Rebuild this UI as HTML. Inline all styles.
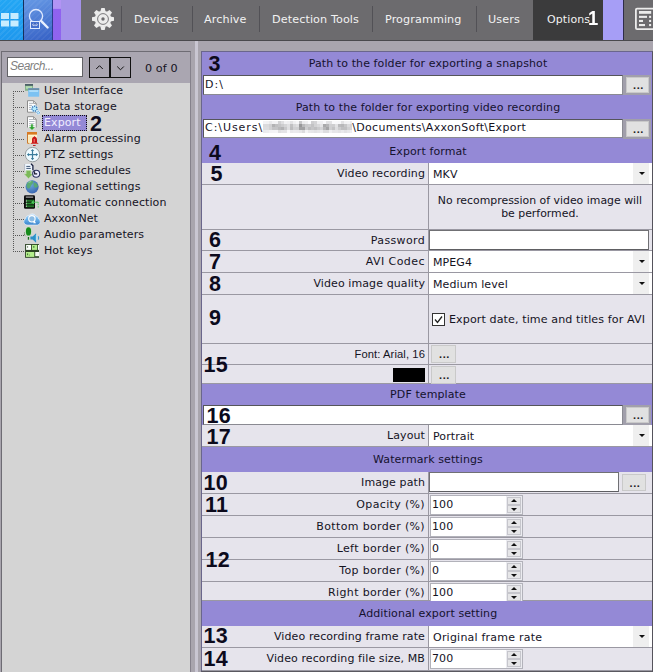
<!DOCTYPE html>
<html><head><meta charset="utf-8"><title>Options - Export</title>
<style>
html,body{margin:0;padding:0}
body{width:653px;height:672px;overflow:hidden;position:relative;background:#a9a5ae;font-family:"DejaVu Sans","Liberation Sans",sans-serif;font-size:11px;letter-spacing:0.1px;color:#15131f}
div,span{box-sizing:border-box}
#top{position:absolute;left:0;top:0;width:653px;height:41px;background:#6c6b6e;border-bottom:1px solid #4a494d}
#top .t{position:absolute;top:0;height:40px;line-height:40px;color:#f2f2f2;font-size:11.200px;white-space:nowrap}
#top .sep{position:absolute;top:6px;height:26px;width:1px;background:#525156}
#left{position:absolute;left:1px;top:51px;width:190px;height:625px;background:#d4d4d4;border:1px solid #6e6c74;border-right-color:#85818c}
#li{position:absolute;left:1px;top:0;width:186px;height:100%}
#srch{position:absolute;left:-1px;top:0;width:188px;height:31px;background:#aaa6b1}
#sbox{position:absolute;left:5px;top:5px;width:76px;height:20px;background:#fff;border:1px solid #626266;font-style:italic;color:#808080;line-height:17px;padding-left:2px;font-family:"Liberation Sans",sans-serif;font-size:12px;letter-spacing:-0.500px}
.nb{position:absolute;margin-left:1px;top:5px;width:21px;height:21px;border:1px solid #111;background:#aaa6b1}
.ti{position:absolute;left:39px;height:16px;line-height:15px;white-space:nowrap;padding:0 2px 0 2px;font-size:11px;color:#15131f}
.ti.sel{background:#9489d6;color:#f0ecff;outline:1px dotted #111;outline-offset:-1px;padding-right:6px}
.ic{position:absolute;left:20px;width:18px;height:16px}
.tl{position:absolute;left:10px;width:11px;height:0;border-top:1px dotted #555}
#tv{position:absolute;left:10px;top:39px;width:0;height:161px;border-left:1px dotted #555}
#right{position:absolute;left:201px;top:51px;width:452px;height:621px;background:#e6e4ec;border:1px solid #6a668c;border-right:1px solid #55535c;border-bottom:2px solid #5a5860}
#right .in{position:absolute;left:-1px;top:-51px}
#rp{position:absolute;left:201px;top:0;width:450px}
.hdr{position:absolute;left:1px;width:450px;padding-left:2px;background:#9489d6;text-align:center;font-size:11px;color:#15122e;white-space:nowrap}
.row{position:absolute;left:1px;width:450px;border-bottom:1px solid #9a98a2;background:#e6e4ec}
.lab{position:absolute;left:0;top:0;width:227px;height:100%;text-align:right;padding-right:3px;border-right:1px solid #9a98a2;white-space:nowrap;font-size:11px}
.val{position:absolute;left:227px;top:0;width:223px}
.combo{position:absolute;left:0;top:0;width:223px;background:#fff;padding-left:4px;white-space:nowrap}
.cbtn{position:absolute;right:3px;top:0;width:16px;background:#efefef}
.cbtn i{position:absolute;left:6px;top:9px;width:0;height:0;border-left:3px solid transparent;border-right:3px solid transparent;border-top:3px solid #111}
.note{position:absolute;left:0;top:9px;width:222px;text-align:center;line-height:13px;font-size:10.900px;letter-spacing:0;padding-left:0}
.pw{position:absolute;left:0;top:0;right:3px;height:20px;background:#fff;border:1px solid #707074;border-bottom-color:#5e5e62}
.chk{position:absolute;left:3px;top:18px;white-space:nowrap;line-height:14px;font-size:11.100px}
.chk .box{display:inline-block;vertical-align:top;width:13px;height:13px;border:1px solid #333;background:#fff;margin-right:4px;position:relative;top:0}
.chk .box svg{position:absolute;left:0;top:0}
.arial{font-family:"Liberation Sans",sans-serif;font-size:11.200px}
.swatch{position:absolute;right:3px;top:3px;width:32px;height:14px;background:#000}
.dots{position:absolute;width:24px;height:17px;background:#e1e1e1;border:1px solid #c9c9c9;text-align:center;line-height:16px;font-family:"Liberation Sans",sans-serif;font-size:11px;font-weight:bold;color:#222;letter-spacing:0.6px;padding-left:2px}
.tbrow{position:absolute;left:1px;width:450px;background:#9489d6}
.gcell{position:absolute;left:421px;top:0;width:28px;height:100%;background:#a19fab}
.tb{position:absolute;top:0;background:#fff;border:1px solid #8a8a92;border-top-color:#55555a;border-left-color:#55555a;padding-left:1px;white-space:nowrap;font-size:11px}
.blur{display:inline-block;vertical-align:-2px}
.spinbox{position:absolute;left:1px;top:1px;width:93px;height:20px;border:1px solid #b2b2ba;background:#ebebf0}
.spin{position:absolute;left:0;top:0;width:75px;height:18px;line-height:18px;background:#fff;padding-left:1px}
.sp{position:absolute;left:76px;width:14px;height:8px;background:#e6e6e8;border:1px solid #c6c6cc}
.sp.up{top:1px} .sp.dn{top:9px}
.sp i{position:absolute;left:3px;top:1px;width:0;height:0;border-left:3px solid transparent;border-right:3px solid transparent}
.sp.up i{border-bottom:3px solid #111}
.sp.dn i{border-top:3px solid #111;top:2px}
.num{position:absolute;font-family:"Liberation Sans",sans-serif;font-weight:bold;font-size:21.500px;line-height:24px;color:#0c0a1c;letter-spacing:0.300px;white-space:nowrap}
</style></head><body>
<div id="top">
 <div style="position:absolute;left:0;top:0;width:23px;height:40px;background:repeating-linear-gradient(135deg,rgba(255,255,255,.07) 0 1.500px,rgba(255,255,255,0) 1.500px 4px),linear-gradient(180deg,#22a6f4,#1e98ee)"></div>
 <div style="position:absolute;left:24px;top:0;width:28px;height:40px;background:repeating-linear-gradient(135deg,rgba(255,255,255,.05) 0 1.500px,rgba(255,255,255,0) 1.500px 4px),linear-gradient(160deg,#6294e2 10%,#3a66c8 90%)"></div>
 <div style="position:absolute;left:23px;top:0;width:1px;height:40px;background:#15305c"></div>
 <div style="position:absolute;left:52px;top:0;width:1px;height:40px;background:#2c3c8c"></div>
 <div style="position:absolute;left:53px;top:0;width:8px;height:40px;background:linear-gradient(180deg,#b294f4 0,#b294f4 21%,#9062f0 23%,#8e64ee 100%)"></div>
 <div style="position:absolute;left:61px;top:0;width:20px;height:40px;background:#a492ea"></div>
 <svg style="position:absolute;left:0.500px;top:13px" width="18" height="14" viewBox="0 0 18 14"><rect x="0" y="0" width="8" height="6" fill="#c8ecff"/><rect x="9.500" y="0" width="8" height="6" fill="#c8ecff"/><rect x="0" y="7.500" width="8" height="6" fill="#c8ecff"/><rect x="9.500" y="7.500" width="8" height="6" fill="#c8ecff"/></svg>
 <svg style="position:absolute;left:27px;top:8px" width="24" height="24" viewBox="0 0 24 24"><circle cx="9" cy="8.100" r="6.600" fill="none" stroke="#e0eaff" stroke-width="1.300"/><path d="M14.300 13.200l6.300 6.300" stroke="#e8f0ff" stroke-width="2.400" stroke-linecap="round"/><rect x="3.500" y="13.500" width="9" height="7" fill="#4672d0" stroke="#e0eaff" stroke-width="1"/><rect x="4.500" y="15.300" width="7" height="2.900" fill="#3c62bc"/><circle cx="6.300" cy="16.700" r="0.850" fill="none" stroke="#eef4ff" stroke-width="0.600"/><circle cx="9.700" cy="16.700" r="0.850" fill="none" stroke="#eef4ff" stroke-width="0.600"/><path d="M6.300 17.600h3.400" stroke="#eef4ff" stroke-width="0.600"/></svg>
 <svg style="position:absolute;left:91px;top:7px" width="24" height="24" viewBox="-12 -12 24 24"><g fill="#ececec"><circle r="8.300"/><path d="M-2.600 -7.400 L-1.700 -11 L1.700 -11 L2.600 -7.400z" transform="rotate(0)"/><path d="M-2.600 -7.400 L-1.700 -11 L1.700 -11 L2.600 -7.400z" transform="rotate(45)"/><path d="M-2.600 -7.400 L-1.700 -11 L1.700 -11 L2.600 -7.400z" transform="rotate(90)"/><path d="M-2.600 -7.400 L-1.700 -11 L1.700 -11 L2.600 -7.400z" transform="rotate(135)"/><path d="M-2.600 -7.400 L-1.700 -11 L1.700 -11 L2.600 -7.400z" transform="rotate(180)"/><path d="M-2.600 -7.400 L-1.700 -11 L1.700 -11 L2.600 -7.400z" transform="rotate(225)"/><path d="M-2.600 -7.400 L-1.700 -11 L1.700 -11 L2.600 -7.400z" transform="rotate(270)"/><path d="M-2.600 -7.400 L-1.700 -11 L1.700 -11 L2.600 -7.400z" transform="rotate(315)"/></g><circle r="5.400" fill="none" stroke="#6c6b6e" stroke-width="0.900"/><circle r="1.700" fill="#6c6b6e"/></svg>
 <div class="sep" style="left:121px"></div>
 <div class="t" style="left:134px">Devices</div>
 <div class="sep" style="left:192px"></div>
 <div class="t" style="left:204px">Archive</div>
 <div class="sep" style="left:259px"></div>
 <div class="t" style="left:272px">Detection Tools</div>
 <div class="sep" style="left:372px"></div>
 <div class="t" style="left:385px">Programming</div>
 <div class="sep" style="left:476px"></div>
 <div class="t" style="left:488px">Users</div>
 <div style="position:absolute;left:533px;top:0;width:70px;height:40px;background:#3b3b3c"></div>
 <div class="t" style="left:547px;font-size:11px">Options</div>
 <div style="position:absolute;left:588px;top:6px;color:#fff;font:bold 20px/24px 'Liberation Sans',sans-serif;transform:scaleX(.92);transform-origin:0 0">1</div>
 <div style="position:absolute;left:603px;top:0;width:20px;height:40px;background:#a69ef6"></div>
 <div style="position:absolute;left:623px;top:0;width:1px;height:40px;background:#2e2c4a"></div>
 <svg style="position:absolute;left:634px;top:7px" width="19" height="24" viewBox="0 0 19 24"><rect x="1.900" y="1.600" width="22" height="20.600" rx="1.200" fill="none" stroke="#ececec" stroke-width="1.800"/><rect x="5" y="4" width="12.200" height="2.800" fill="#ececec"/><rect x="5" y="8.800" width="8" height="2.100" fill="#ececec"/><rect x="5" y="12.900" width="4" height="2.100" fill="#ececec"/><rect x="5" y="17" width="6" height="2.100" fill="#ececec"/><rect x="15.100" y="8.800" width="2" height="2.100" fill="#ececec"/><rect x="15.100" y="12.900" width="2" height="2.100" fill="#ececec"/><rect x="15.100" y="17" width="2" height="2.100" fill="#ececec"/></svg>
</div>
<div style="position:absolute;left:195px;top:41px;width:3px;height:631px;background:#c9c6d2"></div>
<div id="left"><div id="li">
 <div id="srch">
  <div id="sbox">Search...</div>
  <div class="nb" style="left:86px"><svg width="19" height="19" viewBox="0 0 19 19"><path d="M6.200 11l3.300-3.300 3.300 3.300" fill="none" stroke="#111" stroke-width="1"/></svg></div>
  <div class="nb" style="left:107px"><svg width="19" height="19" viewBox="0 0 19 19"><path d="M6.200 8.500l3.300 3.300 3.300-3.300" fill="none" stroke="#111" stroke-width="1"/></svg></div>
  <div style="position:absolute;left:143px;top:7px;line-height:20px;font-size:11.200px;white-space:nowrap">0 of 0</div>
 </div>
 <div id="tv"></div>
 <div style="position:absolute;left:0;top:-52px;"><div class="tl" style="top:91px"></div><div class="ic" style="top:83px"><svg width="18" height="16" viewBox="0 0 18 16"><rect x="2" y="1" width="8" height="6.800" fill="#86b48c"/><rect x="3" y="3.200" width="6" height="2.500" fill="#b4dcb4"/><rect x="2" y="1" width="8" height="1.800" fill="#4c6068"/><rect x="5.200" y="5.200" width="11" height="8.500" fill="#7cc2f2"/><rect x="5.200" y="5.200" width="11" height="1.800" fill="#6c8ca4"/><rect x="6.200" y="7.400" width="9" height="1.300" fill="#c4e8fc"/></svg></div><div class="ti" style="top:83px"><span>User Interface</span></div><div class="tl" style="top:107px"></div><div class="ic" style="top:99px"><svg width="18" height="16" viewBox="0 0 18 16"><path d="M4.500 1.700h6l2.700 2.700v8.800h-8.700z" fill="#fff" stroke="#8c8c8c"/><path d="M10.500 1.700v2.700h2.700" fill="none" stroke="#8c8c8c" stroke-width="0.800"/><path d="M6 4.300h4M6 6.400h3M6 8.400h2M6 10.400h2" stroke="#a4acb4" stroke-width="0.900"/><circle cx="11.500" cy="9.700" r="3.800" fill="#d8f4ff" opacity="0.700"/><circle cx="11.500" cy="9.700" r="2.500" fill="#b4ecff" stroke="#3a78b8" stroke-width="1.500" stroke-dasharray="1.300 0.900"/><circle cx="15.200" cy="13.600" r="2.300" fill="#e4f6ff" opacity="0.800"/><circle cx="15.200" cy="13.600" r="1.300" fill="#c8f0ff" stroke="#4a8cd0" stroke-width="1" stroke-dasharray="1 0.700"/></svg></div><div class="ti" style="top:99px"><span>Data storage</span></div><div class="tl" style="top:123px"></div><div class="ic" style="top:115px"><svg width="18" height="16" viewBox="0 0 18 16"><path d="M4.500 12.600v-10.900h6l2.700 2.700v8.200" fill="#fff" stroke="#8c8c8c"/><path d="M10.500 1.700v2.700h2.700" fill="none" stroke="#8c8c8c" stroke-width="0.800"/><path d="M6 4.500h5M6 6.500h5.500M6 8.600h5.500M6 10.600h5.500" stroke="#b0b8c0" stroke-width="0.900"/><path d="M8 9.300h1.900v2.800h2.100l-3 2.800l-3-2.800h2z" fill="#2fa030" stroke="#8fd890" stroke-width="0.400"/></svg></div><div class="ti sel" style="top:115px"><span>Export</span></div><div class="tl" style="top:139px"></div><div class="ic" style="top:131px"><svg width="18" height="16" viewBox="0 0 18 16"><rect x="4" y="1" width="10" height="11.800" fill="#fff4cc"/><path d="M4.500 1v11.300h2" fill="none" stroke="#c87830"/><rect x="4" y="1" width="10" height="2.600" fill="#d87a22"/><path d="M5.500 6h4M5.500 8h3M5.500 10h2" stroke="#f4dca0" stroke-width="0.900"/><path d="M11.500 5c0.600 1 2.500 1.200 2.500 3.500v3l1.800 1.300h-8.600l1.800-1.300v-3c0-2.300 1.900-2.500 2.500-3.500z" fill="#c81818"/><rect x="10.600" y="8" width="1.300" height="3.400" fill="#f06868"/><rect x="10" y="14" width="2.600" height="0.900" fill="#b01818"/></svg></div><div class="ti" style="top:131px"><span>Alarm processing</span></div><div class="tl" style="top:155px"></div><div class="ic" style="top:147px"><svg width="18" height="16" viewBox="0 0 18 16"><circle cx="9.500" cy="7.600" r="7.200" fill="#eefaff" stroke="#8c9496" stroke-width="0.900"/><path d="M9.500 3v9.200M4.900 7.600h9.200" stroke="#3a7c9c" stroke-width="1.200"/><path d="M9.500 2l1.700 2.100h-3.400zM9.500 13.200l1.700-2.100h-3.400zM3.900 7.600l2.100-1.700v3.400zM15.100 7.600l-2.100-1.700v3.400z" fill="#3a7c9c"/></svg></div><div class="ti" style="top:147px"><span>PTZ settings</span></div><div class="tl" style="top:171px"></div><div class="ic" style="top:163px"><svg width="18" height="16" viewBox="0 0 18 16"><path d="M2 1h6l1.700 1.700v5h-7.700z" fill="#f0f8ff"/><path d="M8 0.800l1.900 1.900v4.500" fill="none" stroke="#182040" stroke-width="1.300"/><path d="M1.700 1v6.500" stroke="#a0a8b8" stroke-width="0.600"/><path d="M3.300 3.400h4M3.300 5.400h4.500" stroke="#405878" stroke-width="1"/><path d="M3.200 7.500h4.600v3.500h2l-4.300 4.500l-4.300-4.500h2z" fill="#7cb85a" stroke="#b8e0a0" stroke-width="0.500"/><circle cx="13.200" cy="10.800" r="3.500" fill="#ececff" stroke="#2a3060" stroke-width="1.100"/><path d="M11.600 8.200v2.700h2.600" stroke="#181830" fill="none" stroke-width="1.100"/></svg></div><div class="ti" style="top:163px"><span>Time schedules</span></div><div class="tl" style="top:187px"></div><div class="ic" style="top:179px"><svg width="18" height="16" viewBox="0 0 18 16"><defs><radialGradient id="gl" cx="40%" cy="35%" r="70%"><stop offset="0" stop-color="#6aa8d8"/><stop offset="1" stop-color="#3a64b0"/></radialGradient></defs><circle cx="9.100" cy="7.800" r="6.600" fill="url(#gl)"/><path d="M4 4.500c1.500-2.500 4-3 6-2.800c1 1.500-0.500 2.800-1.500 4.300s-1.500 3.500-3 3.500s-2.500-2.500-1.500-5zM11 3.500c1.500 0 3.500 1.500 4 3.500c-0.500 1.500-2 2-3 1.500s-2-3.500-1-5z" fill="#5cac6c" opacity="0.900"/><path d="M5 3.500c1-1 2.500-1.500 3.500-1.300c-0.500 1-2 1.800-3.500 1.300z" fill="#a4e0a8" opacity="0.800"/></svg></div><div class="ti" style="top:179px"><span>Regional settings</span></div><div class="tl" style="top:203px"></div><div class="ic" style="top:195px"><svg width="18" height="16" viewBox="0 0 18 16"><rect x="1" y="0.300" width="11" height="13.400" rx="1.300" fill="#0a0a0a"/><rect x="2.800" y="1.300" width="7.400" height="1.700" fill="#7c7c7c"/><path d="M3 5.300h8M3 6.900h8M3 8.500h8M3 10.100h8M3 11.700h8" stroke="#2a9c34" stroke-width="0.900"/><path d="M3.300 4.800v7.400" stroke="#e8ffe8" stroke-width="0.900" stroke-dasharray="0.800 0.800"/><path d="M8 7.200l3.500-2.300l-1.200 2.300l1.200 2.300z" fill="#44d854"/><path d="M9 7.200h6.200v1" fill="none" stroke="#58c868" stroke-width="1"/><path d="M15.200 8.500v5" stroke="#6cd078" stroke-width="1" stroke-dasharray="1.700 0.800"/></svg></div><div class="ti" style="top:195px"><span>Automatic connection</span></div><div class="tl" style="top:219px"></div><div class="ic" style="top:211px"><svg width="18" height="16" viewBox="0 0 18 16"><defs><linearGradient id="cl" x1="0" y1="0" x2="0" y2="1"><stop offset="0" stop-color="#d4e8fa"/><stop offset="0.450" stop-color="#6cb4ec"/><stop offset="1" stop-color="#3c84cc"/></linearGradient></defs><path d="M4 14a3.300 3.300 0 0 1-1.300-6.300a3 3 0 0 1 3.300-3.200a4 4 0 0 1 6.800 0.500a3 3 0 0 1 2.800 3a3.200 3.200 0 0 1-1.200 6z" fill="url(#cl)" stroke="#e8f4ff" stroke-width="0.600"/><circle cx="8.900" cy="7.800" r="3.200" fill="#8cbce4" stroke="#fff" stroke-width="1.100"/><path d="M11.300 9.300l1.700 3h-2.800z" fill="#fff"/></svg></div><div class="ti" style="top:211px"><span>AxxonNet</span></div><div class="tl" style="top:235px"></div><div class="ic" style="top:227px"><svg width="18" height="16" viewBox="0 0 18 16"><ellipse cx="5.500" cy="4.400" rx="3.200" ry="4.800" fill="#b8f0b0" opacity="0.600"/><ellipse cx="5.500" cy="4.400" rx="2.600" ry="4.200" fill="#178a1c"/><path d="M1.500 5.500v2.500l1.300 1.300" fill="none" stroke="#386038" stroke-width="0.700" stroke-dasharray="1 0.600"/><rect x="4.800" y="10" width="1.300" height="2.700" fill="#1a701c"/><path d="M7.400 9.600h2.200l3.500-3.400v9.500l-3.500-3.300h-2.200z" fill="#2a90c8"/><path d="M13.300 8v5.500" stroke="#a8e8ff" stroke-width="1"/><path d="M15.200 9.200q1 1.700 0 3.400" fill="none" stroke="#3a98d0" stroke-width="1.100"/></svg></div><div class="ti" style="top:227px"><span>Audio parameters</span></div><div class="tl" style="top:251px"></div><div class="ic" style="top:243px"><svg width="18" height="16" viewBox="0 0 18 16"><rect x="2.100" y="1" width="13.900" height="13.800" fill="#2c4424"/><rect x="3.100" y="1.900" width="5" height="5" fill="#fcfffc"/><rect x="9" y="1.900" width="5.200" height="5" fill="#b4ee8c"/><rect x="15" y="1.900" width="1" height="5" fill="#fcfffc"/><rect x="3" y="9" width="8.300" height="4.900" fill="#b4ee8c"/><rect x="12.200" y="9" width="3.800" height="4.200" fill="#f4f8f0"/><rect x="4.200" y="3.200" width="0.900" height="1.500" fill="#506848"/><rect x="10.400" y="3" width="0.900" height="1.800" fill="#2c5c24"/><rect x="4.200" y="10.400" width="0.900" height="1.800" fill="#2c5c24"/><rect x="6" y="11.700" width="0.700" height="0.700" fill="#2c5c24"/></svg></div><div class="ti" style="top:243px"><span>Hot keys</span></div></div>
 <div class="num" style="left:87px;top:60px">2</div>
</div></div>
<div id="right"></div>
<div id="rp"><div class="hdr" style="top:52px;height:23px;line-height:24px">Path to the folder for exporting a snapshot</div><div class="tbrow" style="top:75px;height:20px"><div class="tb" style="left:1px;width:420px;height:20px;line-height:17px"><span style="letter-spacing:1px">D:\</span></div><div class="gcell"></div><div class="dots" style="left:424px;top:2px;width:23px;height:16px;line-height:14px">...</div></div><div class="hdr" style="top:95px;height:24px;line-height:25px">Path to the folder for exporting video recording</div><div class="tbrow" style="top:119px;height:20px"><div class="tb" style="left:1px;width:420px;height:19px;line-height:16px"><span style="letter-spacing:0.95px">C:\Users\</span><svg class="blur" width="89" height="12" viewBox="0 0 89 12"><defs><filter id="bf" x="0" y="0" width="1" height="1"><feGaussianBlur stdDeviation="0.7"/></filter></defs><g filter="url(#bf)"><rect x="0" y="0" width="3" height="3" fill="#f3f3f5"/><rect x="3" y="0" width="3" height="3" fill="#f1f1f3"/><rect x="6" y="0" width="3" height="3" fill="#e9e9eb"/><rect x="9" y="0" width="3" height="3" fill="#f2f2f4"/><rect x="12" y="0" width="3" height="3" fill="#f2f2f4"/><rect x="15" y="0" width="3" height="3" fill="#d1d1d3"/><rect x="18" y="0" width="3" height="3" fill="#dfdfe1"/><rect x="21" y="0" width="3" height="3" fill="#f2f2f4"/><rect x="24" y="0" width="3" height="3" fill="#efeff1"/><rect x="27" y="0" width="3" height="3" fill="#e2e2e4"/><rect x="30" y="0" width="3" height="3" fill="#f0f0f2"/><rect x="33" y="0" width="3" height="3" fill="#f6f6f8"/><rect x="36" y="0" width="3" height="3" fill="#c7c7c9"/><rect x="39" y="0" width="3" height="3" fill="#ebebed"/><rect x="42" y="0" width="3" height="3" fill="#eeeef0"/><rect x="45" y="0" width="3" height="3" fill="#f9f9fb"/><rect x="48" y="0" width="3" height="3" fill="#ceced0"/><rect x="51" y="0" width="3" height="3" fill="#d4d4d6"/><rect x="54" y="0" width="3" height="3" fill="#efeff1"/><rect x="57" y="0" width="3" height="3" fill="#efeff1"/><rect x="60" y="0" width="3" height="3" fill="#f9f9fb"/><rect x="63" y="0" width="3" height="3" fill="#e2e2e4"/><rect x="66" y="0" width="3" height="3" fill="#e2e2e4"/><rect x="69" y="0" width="3" height="3" fill="#f9f9fb"/><rect x="72" y="0" width="3" height="3" fill="#f8f8fa"/><rect x="75" y="0" width="3" height="3" fill="#f7f7f9"/><rect x="78" y="0" width="3" height="3" fill="#e2e2e4"/><rect x="81" y="0" width="3" height="3" fill="#f2f2f4"/><rect x="84" y="0" width="3" height="3" fill="#f3f3f5"/><rect x="87" y="0" width="3" height="3" fill="#ebebed"/><rect x="0" y="3" width="3" height="3" fill="#dadadc"/><rect x="3" y="3" width="3" height="3" fill="#dadadc"/><rect x="6" y="3" width="3" height="3" fill="#d1d1d3"/><rect x="9" y="3" width="3" height="3" fill="#b2b2b4"/><rect x="12" y="3" width="3" height="3" fill="#bfbfc1"/><rect x="15" y="3" width="3" height="3" fill="#c4c4c6"/><rect x="18" y="3" width="3" height="3" fill="#ccccce"/><rect x="21" y="3" width="3" height="3" fill="#d5d5d7"/><rect x="24" y="3" width="3" height="3" fill="#e0e0e2"/><rect x="27" y="3" width="3" height="3" fill="#c0c0c2"/><rect x="30" y="3" width="3" height="3" fill="#d7d7d9"/><rect x="33" y="3" width="3" height="3" fill="#dedee0"/><rect x="36" y="3" width="3" height="3" fill="#979799"/><rect x="39" y="3" width="3" height="3" fill="#bababc"/><rect x="42" y="3" width="3" height="3" fill="#c9c9cb"/><rect x="45" y="3" width="3" height="3" fill="#cdcdcf"/><rect x="48" y="3" width="3" height="3" fill="#c2c2c4"/><rect x="51" y="3" width="3" height="3" fill="#d2d2d4"/><rect x="54" y="3" width="3" height="3" fill="#d9d9db"/><rect x="57" y="3" width="3" height="3" fill="#e4e4e6"/><rect x="60" y="3" width="3" height="3" fill="#a9a9ab"/><rect x="63" y="3" width="3" height="3" fill="#b5b5b7"/><rect x="66" y="3" width="3" height="3" fill="#d0d0d2"/><rect x="69" y="3" width="3" height="3" fill="#ceced0"/><rect x="72" y="3" width="3" height="3" fill="#e2e2e4"/><rect x="75" y="3" width="3" height="3" fill="#bbbbbd"/><rect x="78" y="3" width="3" height="3" fill="#b7b7b9"/><rect x="81" y="3" width="3" height="3" fill="#c6c6c8"/><rect x="84" y="3" width="3" height="3" fill="#dadadc"/><rect x="87" y="3" width="3" height="3" fill="#d3d3d5"/><rect x="0" y="6" width="3" height="3" fill="#dddddf"/><rect x="3" y="6" width="3" height="3" fill="#dcdcde"/><rect x="6" y="6" width="3" height="3" fill="#d2d2d4"/><rect x="9" y="6" width="3" height="3" fill="#c3c3c5"/><rect x="12" y="6" width="3" height="3" fill="#c4c4c6"/><rect x="15" y="6" width="3" height="3" fill="#b9b9bb"/><rect x="18" y="6" width="3" height="3" fill="#b2b2b4"/><rect x="21" y="6" width="3" height="3" fill="#c8c8ca"/><rect x="24" y="6" width="3" height="3" fill="#dfdfe1"/><rect x="27" y="6" width="3" height="3" fill="#bcbcbe"/><rect x="30" y="6" width="3" height="3" fill="#d0d0d2"/><rect x="33" y="6" width="3" height="3" fill="#cfcfd1"/><rect x="36" y="6" width="3" height="3" fill="#a1a1a3"/><rect x="39" y="6" width="3" height="3" fill="#a1a1a3"/><rect x="42" y="6" width="3" height="3" fill="#ccccce"/><rect x="45" y="6" width="3" height="3" fill="#bcbcbe"/><rect x="48" y="6" width="3" height="3" fill="#c5c5c7"/><rect x="51" y="6" width="3" height="3" fill="#bfbfc1"/><rect x="54" y="6" width="3" height="3" fill="#cacacc"/><rect x="57" y="6" width="3" height="3" fill="#d4d4d6"/><rect x="60" y="6" width="3" height="3" fill="#b7b7b9"/><rect x="63" y="6" width="3" height="3" fill="#a4a4a6"/><rect x="66" y="6" width="3" height="3" fill="#cfcfd1"/><rect x="69" y="6" width="3" height="3" fill="#c3c3c5"/><rect x="72" y="6" width="3" height="3" fill="#dddddf"/><rect x="75" y="6" width="3" height="3" fill="#ccccce"/><rect x="78" y="6" width="3" height="3" fill="#bfbfc1"/><rect x="81" y="6" width="3" height="3" fill="#c0c0c2"/><rect x="84" y="6" width="3" height="3" fill="#d0d0d2"/><rect x="87" y="6" width="3" height="3" fill="#d5d5d7"/><rect x="0" y="9" width="3" height="3" fill="#ebebed"/><rect x="3" y="9" width="3" height="3" fill="#ededef"/><rect x="6" y="9" width="3" height="3" fill="#f2f2f4"/><rect x="9" y="9" width="3" height="3" fill="#f3f3f5"/><rect x="12" y="9" width="3" height="3" fill="#f4f4f6"/><rect x="15" y="9" width="3" height="3" fill="#dfdfe1"/><rect x="18" y="9" width="3" height="3" fill="#e4e4e6"/><rect x="21" y="9" width="3" height="3" fill="#e4e4e6"/><rect x="24" y="9" width="3" height="3" fill="#f9f9fb"/><rect x="27" y="9" width="3" height="3" fill="#e8e8ea"/><rect x="30" y="9" width="3" height="3" fill="#ebebed"/><rect x="33" y="9" width="3" height="3" fill="#eaeaec"/><rect x="36" y="9" width="3" height="3" fill="#e6e6e8"/><rect x="39" y="9" width="3" height="3" fill="#dbdbdd"/><rect x="42" y="9" width="3" height="3" fill="#f3f3f5"/><rect x="45" y="9" width="3" height="3" fill="#e8e8ea"/><rect x="48" y="9" width="3" height="3" fill="#e6e6e8"/><rect x="51" y="9" width="3" height="3" fill="#e2e2e4"/><rect x="54" y="9" width="3" height="3" fill="#e6e6e8"/><rect x="57" y="9" width="3" height="3" fill="#ebebed"/><rect x="60" y="9" width="3" height="3" fill="#dddddf"/><rect x="63" y="9" width="3" height="3" fill="#dddddf"/><rect x="66" y="9" width="3" height="3" fill="#efeff1"/><rect x="69" y="9" width="3" height="3" fill="#e6e6e8"/><rect x="72" y="9" width="3" height="3" fill="#e7e7e9"/><rect x="75" y="9" width="3" height="3" fill="#e3e3e5"/><rect x="78" y="9" width="3" height="3" fill="#e9e9eb"/><rect x="81" y="9" width="3" height="3" fill="#e2e2e4"/><rect x="84" y="9" width="3" height="3" fill="#e8e8ea"/><rect x="87" y="9" width="3" height="3" fill="#eeeef0"/></g></svg><span style="letter-spacing:0.32px">\Documents\AxxonSoft\Export</span></div><div class="gcell"></div><div class="dots" style="left:424px;top:2px;width:23px;height:16px;line-height:14px">...</div></div><div class="hdr" style="top:139px;height:24px;line-height:25px">Export format</div><div class="row" style="top:163px;height:22px"><div class="lab" style="line-height:21px">Video recording</div><div class="val" style="height:21px"><div class="combo" style="height:21px;line-height:23px">MKV<span class="cbtn" style="height:21px"><i></i></span></div></div></div><div class="row" style="top:185px;height:45px"><div class="lab" style="line-height:21px"></div><div class="val" style="height:44px"><div class="note">No recompression of video image will<br>be performed.</div></div></div><div class="row" style="top:230px;height:21px"><div class="lab" style="line-height:21px"><span style="letter-spacing:0.35px">Password</span></div><div class="val" style="height:20px"><div class="pw"></div></div></div><div class="row" style="top:251px;height:22px"><div class="lab" style="line-height:21px"><span style="letter-spacing:0.45px">AVI Codec</span></div><div class="val" style="height:21px"><div class="combo" style="height:21px;line-height:23px">MPEG4<span class="cbtn" style="height:21px"><i></i></span></div></div></div><div class="row" style="top:273px;height:22px"><div class="lab" style="line-height:21px">Video image quality</div><div class="val" style="height:21px"><div class="combo" style="height:21px;line-height:23px">Medium level<span class="cbtn" style="height:21px"><i></i></span></div></div></div><div class="row" style="top:295px;height:49px"><div class="lab" style="line-height:21px"></div><div class="val" style="height:48px"><div class="chk"><span class="box"><svg width="11" height="11" viewBox="0 0 11 11"><path d="M2 5.5 L4.5 8.5 L9 2.5" fill="none" stroke="#222" stroke-width="1.3"/></svg></span>Export date, time and titles for AVI</div></div></div><div class="row" style="top:344px;height:21px"><div class="lab" style="line-height:21px"><span class="arial">Font: Arial, 16</span></div><div class="val" style="height:20px"><div class="dots" style="left:2px;top:1px;width:25px;height:18px">...</div></div></div><div class="row" style="top:365px;height:19px"><div class="lab" style="line-height:21px"><span class="swatch"></span></div><div class="val" style="height:18px"><div class="dots" style="left:2px;top:1px;width:25px;height:18px">...</div></div></div><div class="hdr" style="top:384px;height:21px;line-height:22px">PDF template</div><div class="tbrow" style="top:405px;height:20px"><div class="tb" style="left:1px;width:420px;height:20px;line-height:17px"></div><div class="gcell"></div><div class="dots" style="left:424px;top:2px;width:23px;height:16px;line-height:14px">...</div></div><div class="row" style="top:425px;height:22px"><div class="lab" style="line-height:21px">Layout</div><div class="val" style="height:21px"><div class="combo" style="height:21px;line-height:23px">Portrait<span class="cbtn" style="height:21px"><i></i></span></div></div></div><div class="hdr" style="top:447px;height:25px;line-height:26px">Watermark settings</div><div class="row" style="top:472px;height:22px"><div class="lab" style="line-height:21px">Image path</div><div class="val" style="height:21px"><div class="pw" style="width:190px;right:auto"></div><div class="dots" style="left:193px;top:2px">...</div></div></div><div class="row" style="top:494px;height:22px"><div class="lab" style="line-height:21px"><span style="letter-spacing:0.35px">Opacity (%)</span></div><div class="val" style="height:21px"><div class="spinbox"><div class="spin">100</div><span class="sp up"><i></i></span><span class="sp dn"><i></i></span></div></div></div><div class="row" style="top:516px;height:22px"><div class="lab" style="line-height:21px"><span style="letter-spacing:0.35px">Bottom border (%)</span></div><div class="val" style="height:21px"><div class="spinbox"><div class="spin">100</div><span class="sp up"><i></i></span><span class="sp dn"><i></i></span></div></div></div><div class="row" style="top:538px;height:22px"><div class="lab" style="line-height:21px"><span style="letter-spacing:0.35px">Left border (%)</span></div><div class="val" style="height:21px"><div class="spinbox"><div class="spin">0</div><span class="sp up"><i></i></span><span class="sp dn"><i></i></span></div></div></div><div class="row" style="top:560px;height:22px"><div class="lab" style="line-height:21px"><span style="letter-spacing:0.35px">Top border (%)</span></div><div class="val" style="height:21px"><div class="spinbox"><div class="spin">0</div><span class="sp up"><i></i></span><span class="sp dn"><i></i></span></div></div></div><div class="row" style="top:582px;height:19px"><div class="lab" style="line-height:21px"><span style="letter-spacing:0.35px">Right border (%)</span></div><div class="val" style="height:18px"><div class="spinbox"><div class="spin">100</div><span class="sp up"><i></i></span><span class="sp dn"><i></i></span></div></div></div><div class="hdr" style="top:601px;height:25px;line-height:26px">Additional export setting</div><div class="row" style="top:626px;height:22px"><div class="lab" style="line-height:21px">Video recording frame rate</div><div class="val" style="height:21px"><div class="combo" style="height:21px;line-height:23px"><span style="letter-spacing:0.22px">Original frame rate</span><span class="cbtn" style="height:21px"><i></i></span></div></div></div><div class="row" style="top:648px;height:23px"><div class="lab" style="line-height:21px">Video recording file size, MB</div><div class="val" style="height:22px"><div class="spinbox"><div class="spin">700</div><span class="sp up"><i></i></span><span class="sp dn"><i></i></span></div></div></div><div class="num" style="left:7.5px;top:51.5px">3</div><div class="num" style="left:8px;top:141px">4</div><div class="num" style="left:9.5px;top:162px">5</div><div class="num" style="left:8px;top:228px">6</div><div class="num" style="left:8px;top:250px">7</div><div class="num" style="left:8px;top:272px">8</div><div class="num" style="left:8px;top:306px">9</div><div class="num" style="left:2.5px;top:352.5px">15</div><div class="num" style="left:5.5px;top:403.5px">16</div><div class="num" style="left:5.5px;top:425px">17</div><div class="num" style="left:2.5px;top:471px">10</div><div class="num" style="left:4px;top:492.5px">11</div><div class="num" style="left:4.5px;top:547.5px">12</div><div class="num" style="left:2.5px;top:624px">13</div><div class="num" style="left:2.5px;top:647px">14</div></div>
</body></html>
